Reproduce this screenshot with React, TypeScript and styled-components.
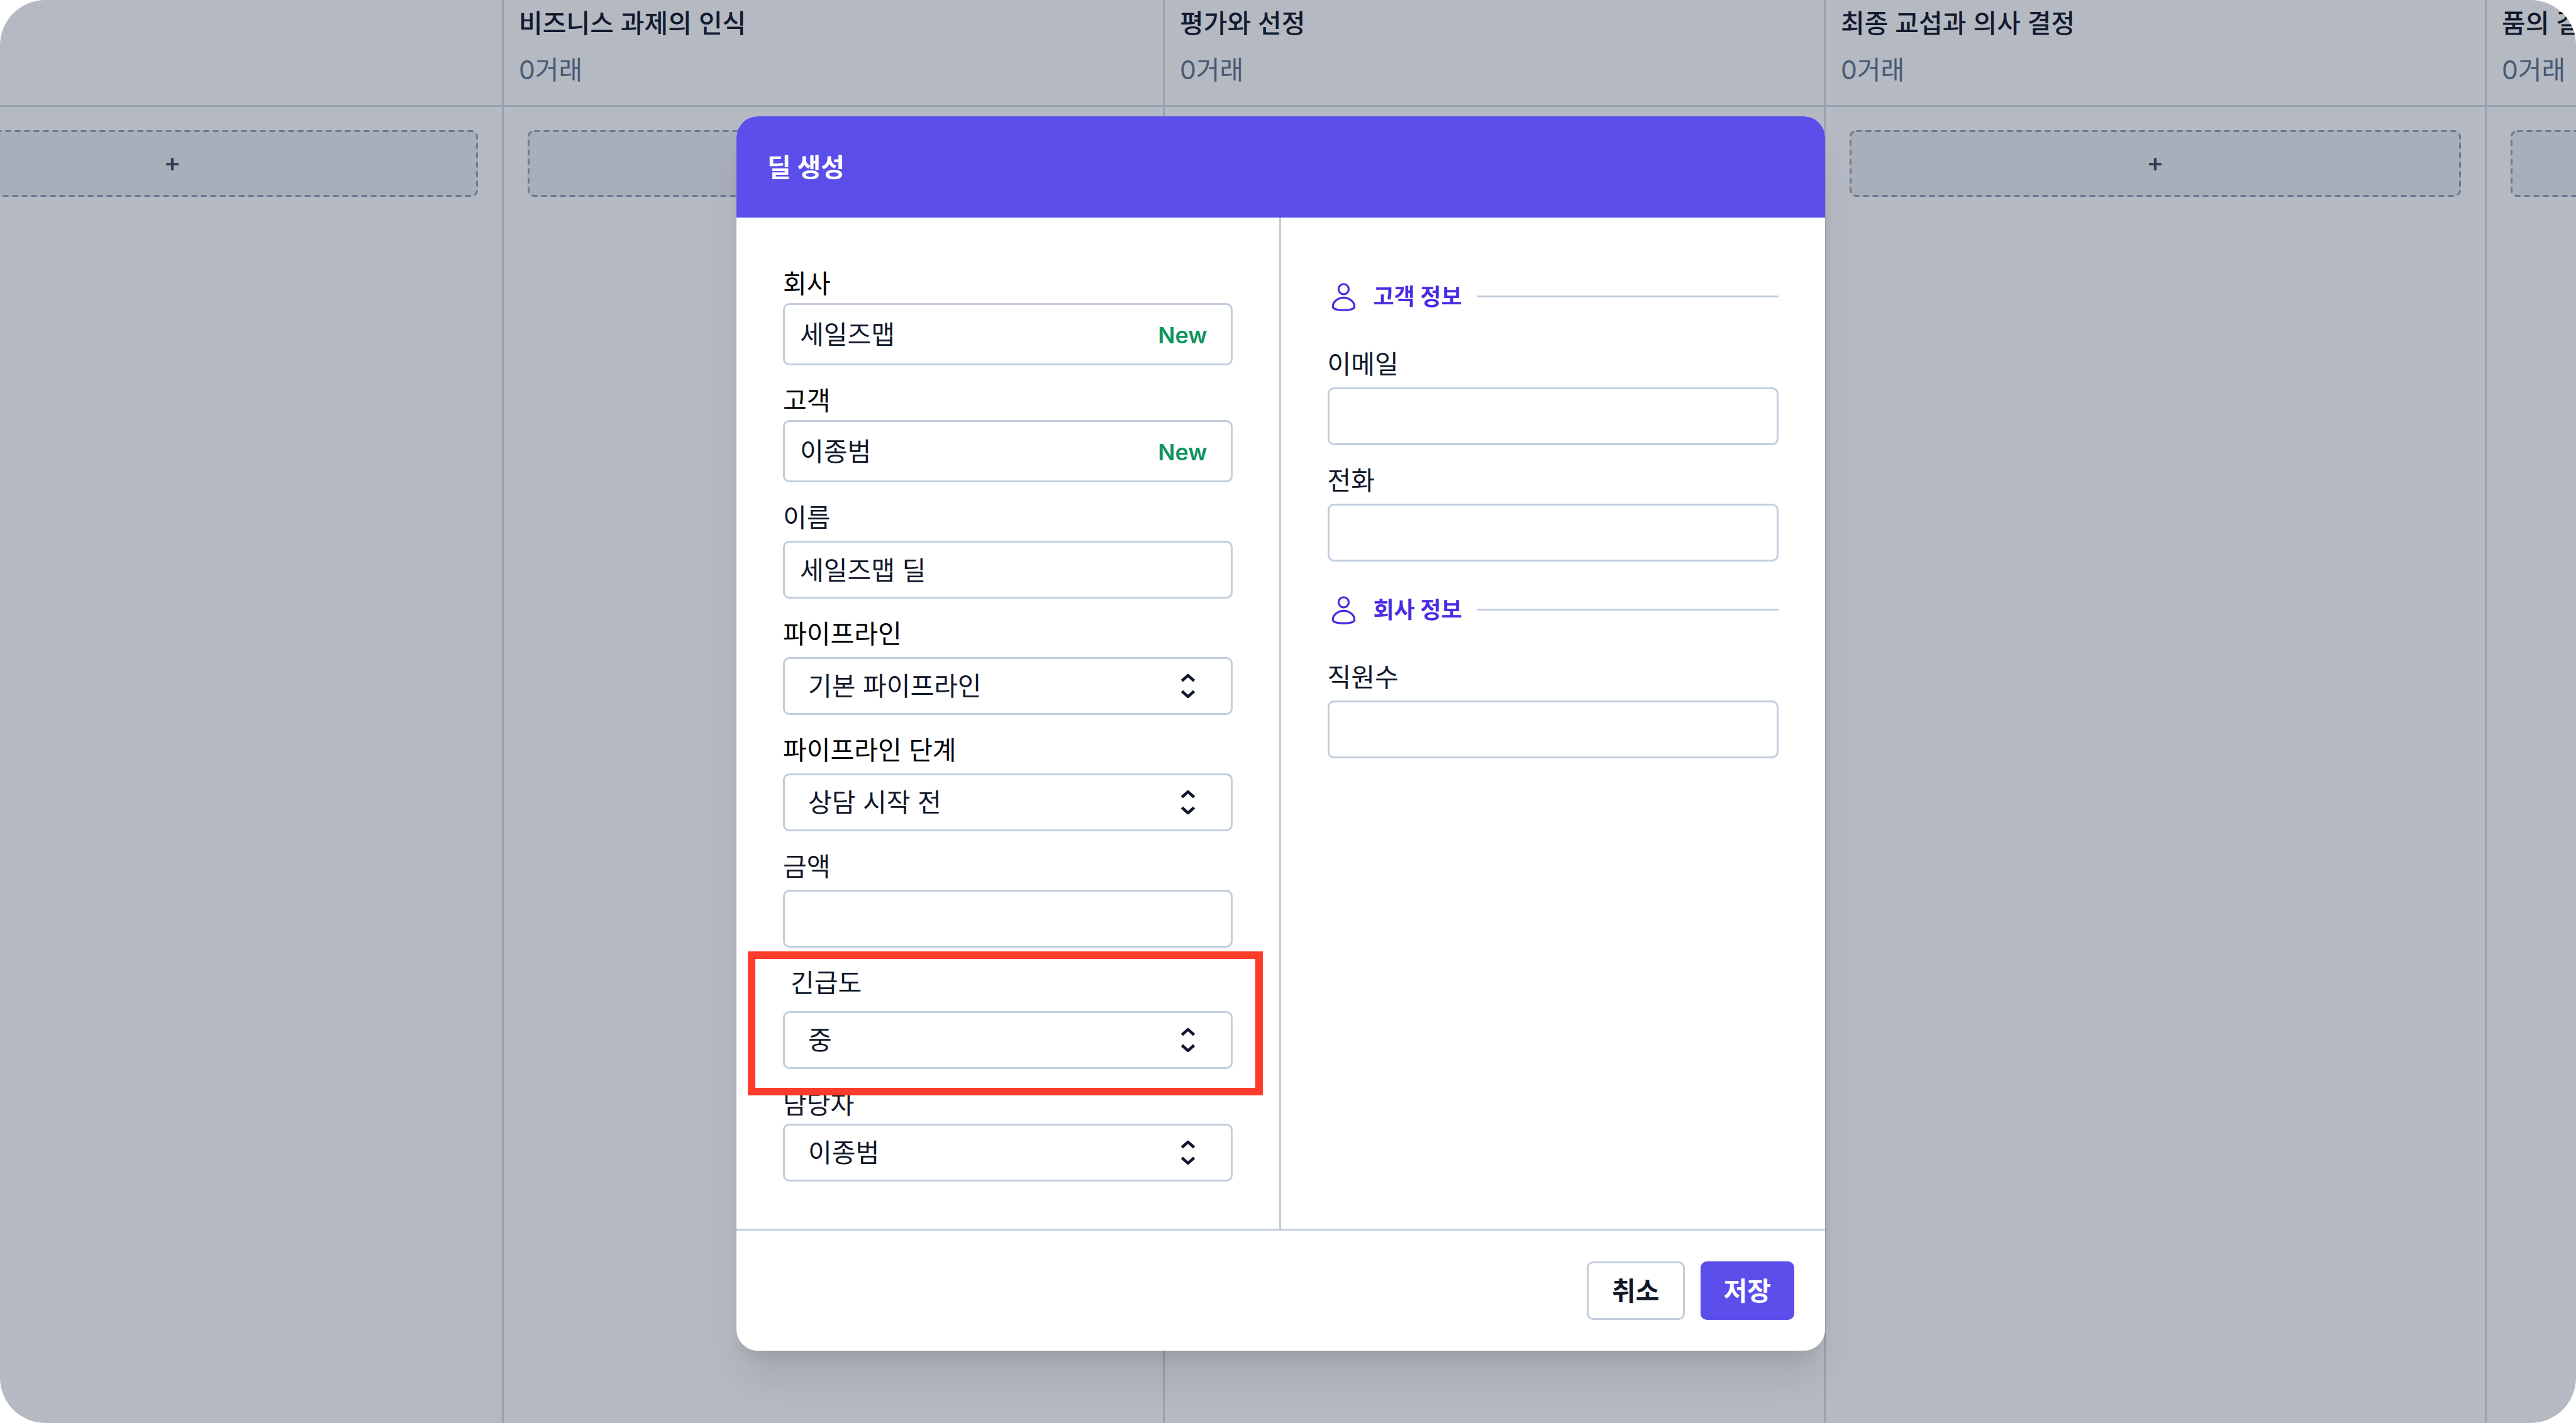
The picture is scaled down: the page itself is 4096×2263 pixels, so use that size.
import React, { useId } from "react";
import styled, { createGlobalStyle, css } from "styled-components";

const color = {
  ink: "#0f172a",
  black: "#000000",
  brand: "#5b4eeb",
  brandText: "#4a2be2",
  line: "#c2cddc",
  fresh: "#0d945f",
  backdrop: "#b5b9c2",
  boardLine: "#98a1af",
  boardInk: "#111a2e",
  boardMuted: "#475a73",
  dash: "#6b7a90",
};

const GlobalStyle = createGlobalStyle`
  *, *::before, *::after { box-sizing: border-box; }
  html, body, #root { height: 100%; }
  body {
    margin: 0;
    background: #ffffff;
    color: ${color.ink};
    font-family: Inter, "Noto Sans CJK KR", sans-serif;
    font-size: 41px;
    line-height: 62px;
  }
  button, input, select { font: inherit; color: inherit; margin: 0; }
  h1, h2, h3, p { margin: 0; font-size: inherit; }
`;

const Screen = styled.div`
  position: relative;
  height: 100%;
  min-height: 2263px;
  overflow: hidden;
  border-radius: 72px;
  background: ${color.backdrop};
`;

/* ---------- pipeline board ---------- */

const Board = styled.main`
  display: flex;
  min-height: inherit;
  height: 100%;
  margin-left: -250px;
`;

const Column = styled.section`
  flex: 0 0 1051px;
  border-right: 3px solid ${color.boardLine};
`;

const ColumnHead = styled.header`
  height: 170px;
  padding: 6px 24px 0;
  border-bottom: 3px solid ${color.boardLine};
`;

const ColumnTitle = styled.h2`
  color: ${color.boardInk};
  font-weight: 500;
  white-space: nowrap;
`;

const ColumnCount = styled.p`
  margin-top: 12px;
  color: ${color.boardMuted};
`;

const ColumnBody = styled.div`
  padding: 37px 38px;
`;

const AddDeal = styled.button`
  position: relative;
  display: block;
  width: 100%;
  height: 106px;
  padding: 0 0 4px;
  border: 0;
  border-radius: 10px;
  background: #a8aeba;
  color: #2f3b50;
  font-weight: 500;
`;

const DashedOutline = styled.svg`
  position: absolute;
  inset: 0;
  width: 100%;
  height: 100%;
  overflow: visible;

  rect {
    width: calc(100% - 3px);
    height: calc(100% - 3px);
  }
`;

/* ---------- dialog ---------- */

const Overlay = styled.div`
  position: absolute;
  inset: 0;
  display: flex;
  justify-content: center;
  align-items: flex-start;
  padding: 185px 23px 0 0;
`;

const Dialog = styled.form`
  width: 1731px;
  max-width: 100%;
  overflow: hidden;
  border-radius: 34px;
  background: #ffffff;
`;

const DialogShadow = styled.div`
  border-radius: 34px;
  box-shadow: 0 51px 64px -13px rgba(0, 0, 0, 0.1),
    0 20px 26px -15px rgba(0, 0, 0, 0.1);
`;

const DialogHead = styled.header`
  display: flex;
  align-items: center;
  height: 161px;
  padding: 0 49px;
  background: ${color.brand};
  color: #ffffff;
`;

const DialogTitle = styled.h1`
  font-weight: 700;
`;

const DialogBody = styled.div`
  display: grid;
  grid-template-columns: 1fr 1fr;
`;

const Pane = styled.div<{ $divided?: boolean }>`
  display: flex;
  flex-direction: column;
  gap: 25px;
  padding: 74px 74px 75px;
  ${(p) => p.$divided && css`border-right: 3px solid ${color.line};`}
`;

const FieldBox = styled.div<{ $gap: number }>`
  position: relative;
  display: flex;
  flex-direction: column;
  gap: ${(p) => p.$gap}px;
`;

const Label = styled.label<{ $dark?: boolean; $indent?: boolean }>`
  padding-left: ${(p) => (p.$indent ? 12 : 0)}px;
  color: ${(p) => (p.$dark ? color.black : color.ink)};
`;

const Control = styled.div`
  position: relative;
  display: flex;
`;

const controlStyle = css`
  width: 100%;
  border: 3px solid ${color.line};
  border-radius: 10px;
  outline: none;
  background: #ffffff;
  color: ${color.ink};
`;

const TextInput = styled.input<{ $tall?: boolean }>`
  ${controlStyle}
  height: ${(p) => (p.$tall ? 99 : 92)}px;
  padding: 0 24px 5px;
`;

const Select = styled.select`
  ${controlStyle}
  appearance: none;
  height: 92px;
  padding: 0 37px;
`;

const NewTag = styled.span`
  position: absolute;
  top: 20px;
  right: 40px;
  color: ${color.fresh};
  font-size: 36px;
  font-weight: 600;
`;

const Chevrons = styled.svg`
  position: absolute;
  top: 17px;
  right: 42px;
  width: 58px;
  height: 58px;
  pointer-events: none;
`;

const Highlight = styled.div`
  position: absolute;
  z-index: 1;
  inset: -19px -48px -42px -56px;
  border: 12px solid #ff3b2a;
  pointer-events: none;
`;

const Section = styled.div`
  display: flex;
  align-items: center;
  height: 103px;
  color: ${color.brandText};
  font-size: 36px;

  svg {
    width: 51px;
    height: 51px;
    margin-right: 22px;
  }

  &::after {
    content: "";
    flex: 1;
    height: 3px;
    margin-left: 24px;
    background: ${color.line};
  }
`;

const SectionTitle = styled.h3`
  font-weight: 700;
`;

const DialogFoot = styled.footer`
  display: flex;
  justify-content: flex-end;
  gap: 25px;
  padding: 49px;
  border-top: 3px solid ${color.line};
`;

const Button = styled.button<{ $primary?: boolean }>`
  height: 93px;
  padding: 0 37px;
  border: 3px solid ${color.line};
  border-radius: 10px;
  background: #ffffff;
  color: ${color.ink};
  font-weight: 700;
  ${(p) =>
    p.$primary &&
    css`
      border: 0;
      background: ${color.brand};
      color: #ffffff;
    `}
`;

/* ---------- parts ---------- */

type FieldProps = {
  label: string;
  value?: string;
  options?: string[];
  dark?: boolean;
  isNew?: boolean;
  gap?: number;
  highlighted?: boolean;
};

function Field({ label, value = "", options, dark, isNew, gap = 6, highlighted }: FieldProps) {
  const id = useId();
  return (
    <FieldBox $gap={gap}>
      <Label htmlFor={id} $dark={dark} $indent={highlighted}>
        {label}
      </Label>
      <Control>
        {options ? (
          <>
            <Select id={id} defaultValue={options[0]}>
              {options.map((option) => (
                <option key={option}>{option}</option>
              ))}
            </Select>
            <Chevrons viewBox="0 0 24 24" fill="none" stroke={color.ink} strokeWidth="1.9" strokeLinejoin="round" aria-hidden>
              <path d="M8 15.4L12 19 16 15.4M8 8.6L12 5 16 8.6" />
            </Chevrons>
          </>
        ) : (
          <TextInput id={id} defaultValue={value} $tall={isNew} />
        )}
        {isNew && <NewTag>New</NewTag>}
      </Control>
      {highlighted && <Highlight />}
    </FieldBox>
  );
}

function SectionHead({ title }: { title: string }) {
  return (
    <Section>
      <svg viewBox="0 0 24 24" fill="none" stroke="currentColor" strokeWidth="1.5" aria-hidden>
        <circle cx="12" cy="6.5" r="3.8" />
        <path d="M12 12.9c-4.5 0-8.1 3.2-8.1 6.6 0 1.7 3.3 2.7 8.1 2.7s8.1-1 8.1-2.7c0-3.4-3.6-6.6-8.1-6.6Z" />
      </svg>
      <SectionTitle>{title}</SectionTitle>
    </Section>
  );
}

const columns = ["", "비즈니스 과제의 인식", "평가와 선정", "최종 교섭과 의사 결정", "품의 결재"];

export default function App() {
  return (
    <>
      <GlobalStyle />
      <Screen>
        <Board>
          {columns.map((title) => (
            <Column key={title}>
              <ColumnHead>
                {title && (
                  <>
                    <ColumnTitle>{title}</ColumnTitle>
                    <ColumnCount>0거래</ColumnCount>
                  </>
                )}
              </ColumnHead>
              <ColumnBody>
                <AddDeal type="button">
                  +
                  <DashedOutline aria-hidden>
                    <rect x="1.5" y="1.5" rx="9" fill="none" stroke={color.dash} strokeWidth="3" strokeDasharray="9 6" />
                  </DashedOutline>
                </AddDeal>
              </ColumnBody>
            </Column>
          ))}
        </Board>

        <Overlay>
          <DialogShadow>
            <Dialog onSubmit={(e) => e.preventDefault()}>
              <DialogHead>
                <DialogTitle>딜 생성</DialogTitle>
              </DialogHead>
              <DialogBody>
                <Pane $divided>
                  <Field label="회사" value="세일즈맵" dark isNew gap={0} />
                  <Field label="고객" value="이종범" dark isNew gap={0} />
                  <Field label="이름" value="세일즈맵 딜" />
                  <Field label="파이프라인" options={["기본 파이프라인"]} dark />
                  <Field label="파이프라인 단계" options={["상담 시작 전"]} dark />
                  <Field label="금액" />
                  <Field label="긴급도" options={["중"]} gap={14} highlighted />
                  <Field label="담당자" options={["이종범"]} gap={0} />
                </Pane>
                <Pane>
                  <SectionHead title="고객 정보" />
                  <Field label="이메일" />
                  <Field label="전화" />
                  <SectionHead title="회사 정보" />
                  <Field label="직원수" />
                </Pane>
              </DialogBody>
              <DialogFoot>
                <Button type="button">취소</Button>
                <Button type="submit" $primary>
                  저장
                </Button>
              </DialogFoot>
            </Dialog>
          </DialogShadow>
        </Overlay>
      </Screen>
    </>
  );
}
